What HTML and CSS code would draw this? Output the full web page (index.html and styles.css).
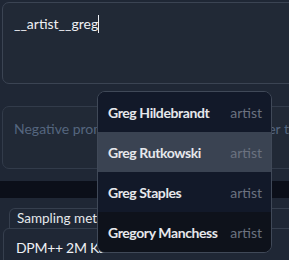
FILE: index.html
```html
<!DOCTYPE html>
<html lang="en">
<head>
  <meta charset="UTF-8" />
  <title>Prompt</title>
  <link rel="stylesheet" href="styles.css">
</head>
<body>
  <div class="prompt-area">
    <div class="prompt-box">
      <span class="prompt-text">__artist__greg</span><span class="caret"></span>
    </div>

    <div class="prompt-box negative">
      <span class="placeholder">Negative prom<span class="tight">pt (press Ctrl+Enter or Alt+Ent</span>er to generate)</span>
    </div>
  </div>

  <div class="divider"></div>

  <div class="settings">
    <div class="field-label">Sampling method</div>
    <div class="dropdown">DPM++ 2M Karras</div>
  </div>

  <ul class="autocomplete">
    <li class="suggestion"><span class="name">Greg Hildebrandt</span><span class="tag">artist</span></li>
    <li class="suggestion active"><span class="name">Greg Rutkowski</span><span class="tag">artist</span></li>
    <li class="suggestion"><span class="name">Greg Staples</span><span class="tag">artist</span></li>
    <li class="suggestion last"><span class="name">Gregory Manchess</span><span class="tag">artist</span></li>
  </ul>
</body>
</html>
```

FILE: styles.css
```css
body {
  margin: 0;
  padding: 0;
  width: 289px;
  height: 260px;
  overflow: hidden;
  position: relative;
  background-color: #1f2735;
  font-family: Lato, "Open Sans", sans-serif;
  font-size: 14px;
}

.prompt-area {
  padding: 2px 0 0 2px;
}

.prompt-box {
  width: 320px;
  height: 82px;
  box-sizing: border-box;
  border: 1px solid #3b4453;
  border-radius: 7px;
  background-color: #212936;
  padding: 12px 11px;
  display: flex;
  align-items: flex-start;
  white-space: nowrap;
  overflow: hidden;
}

.prompt-text {
  color: #eef0f4;
  line-height: 18px;
}

.caret {
  display: inline-block;
  width: 1px;
  height: 18px;
  background-color: #eef0f4;
}

.negative {
  margin-top: 22px;
  height: 63px;
  padding: 13px 11px;
  border-color: #323b4a;
}

.placeholder {
  color: #55667f;
  line-height: 18px;
}

/* hidden under the popup anyway */
.tight {
  letter-spacing: -0.7px;
}

.divider {
  margin-top: 12px;
  height: 17px;
  background-color: #0b0f19;
}

.settings {
  padding-top: 10px;
}

.field-label {
  margin-left: 9px;
  width: 300px;
  height: 20px;
  box-sizing: border-box;
  border: 1px solid #363f4e;
  border-bottom: none;
  border-radius: 6px 0 0 0;
  padding: 0 7px;
  color: #e5e7eb;
  font-size: 13.5px;
  line-height: 19px;
}

.dropdown {
  margin-left: 3px;
  width: 300px;
  height: 40px;
  box-sizing: border-box;
  border: 1px solid #363f4e;
  border-radius: 6px 0 0 0;
  padding: 10px 12px;
  color: #eef0f4;
  line-height: 18px;
  letter-spacing: -0.3px;
}

.autocomplete {
  position: absolute;
  left: 97px;
  top: 91px;
  width: 173px;
  margin: 0;
  padding: 0;
  list-style: none;
  border: 1px solid #404958;
  border-radius: 8px;
  overflow: hidden;
  background-color: #111827;
}

.suggestion {
  height: 40px;
  display: flex;
  align-items: center;
  justify-content: space-between;
  padding: 0 9px 0 10px;
  background-color: #121929;
}

.suggestion.active {
  background-color: #3a4352;
}

.suggestion.last {
  background-color: #0e121b;
}

.name {
  color: #e6e8ec;
  font-weight: 700;
  letter-spacing: -0.4px;
}

.tag {
  color: #6b7280;
}
```
